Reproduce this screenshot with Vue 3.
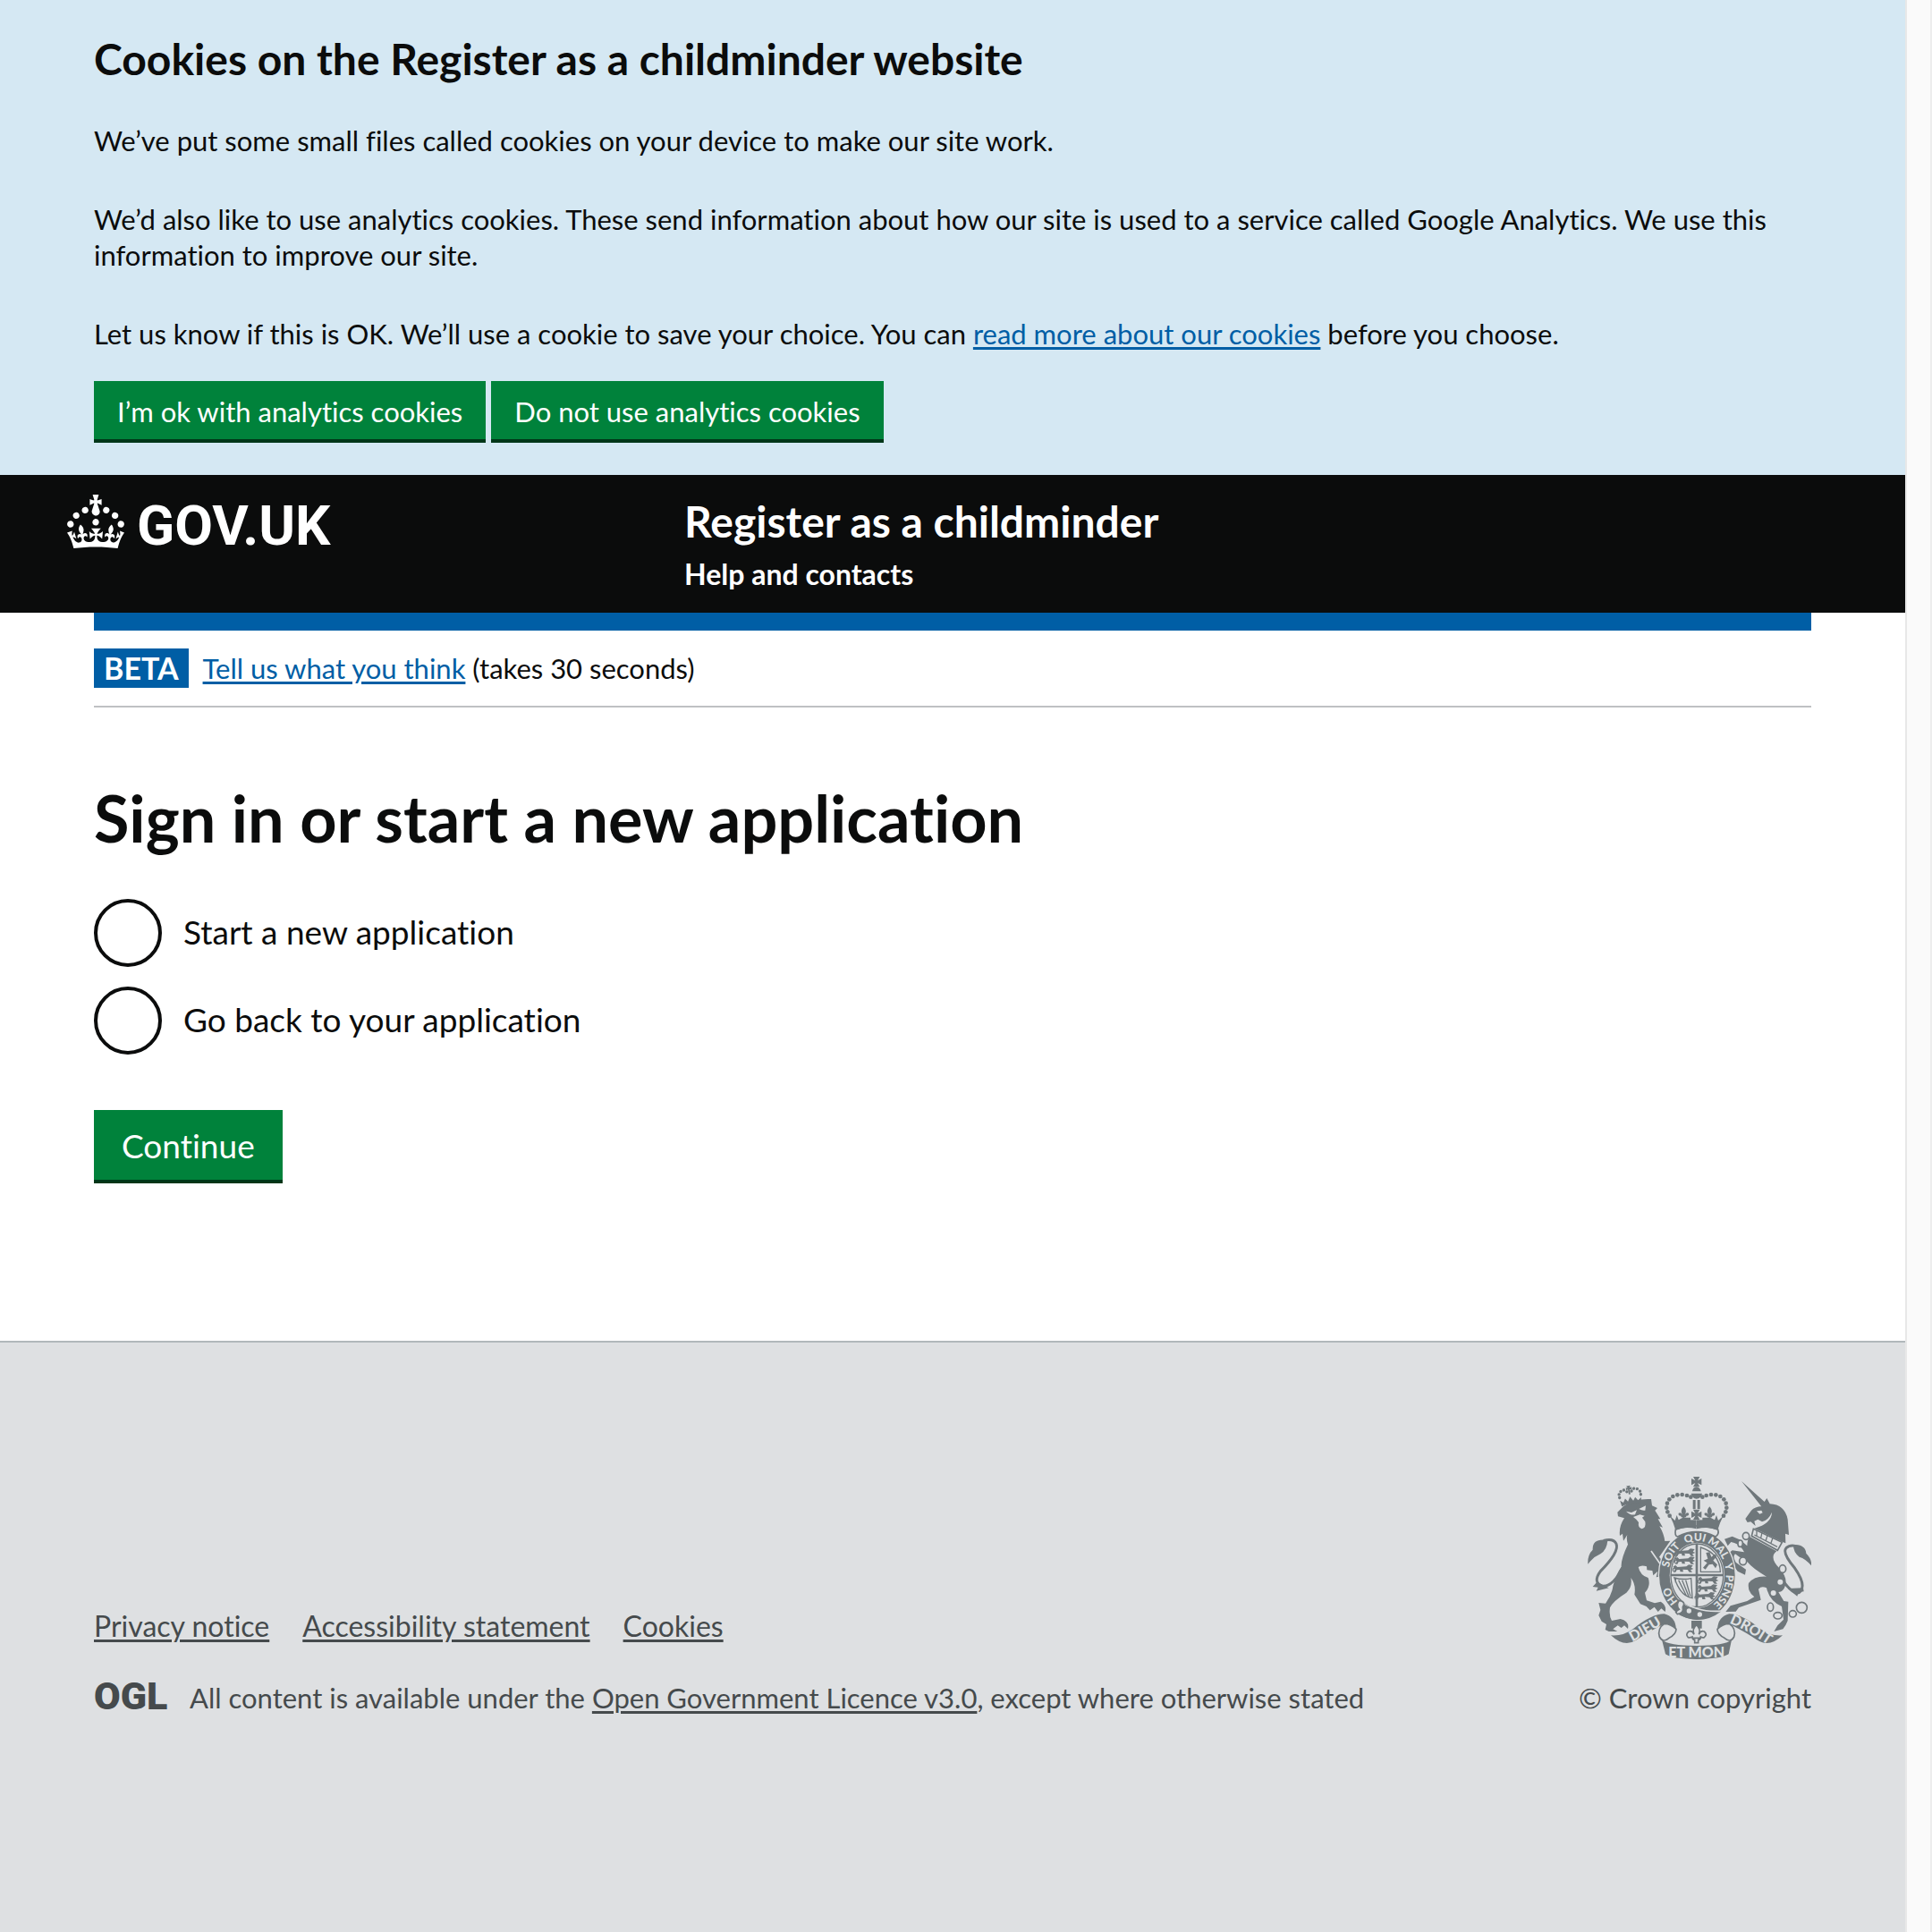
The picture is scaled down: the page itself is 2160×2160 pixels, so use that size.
<script setup>
import { ref } from 'vue'

const choice = ref('')
const options = [
  { id: 'start', label: 'Start a new application' },
  { id: 'return', label: 'Go back to your application' },
]
const footerLinks = ['Privacy notice', 'Accessibility statement', 'Cookies']

// Pearls on the left arch of the central crown, mirrored for the right one
const pearls = [
  [451, 161], [438, 156], [422, 153], [406, 154], [391, 159],
  [379, 169], [372, 182], [370, 197], [373, 211], [380, 224],
]
// Centres of the heraldic lions in the first and fourth quarters
const lions = [
  [434, 348], [434, 375], [428, 402],
  [512, 441], [510, 468], [502, 494],
]
</script>

<template>
  <div class="window">
    <div class="page">
      <section class="cookies" aria-label="Cookie banner">
        <h2>Cookies on the Register as a childminder website</h2>
        <div class="cookies-copy">
          <p>We’ve put some small files called cookies on your device to make our site work.</p>
          <p>We’d also like to use analytics cookies. These send information about how our site is used to a service called Google Analytics. We use this information to improve our site.</p>
          <p>Let us know if this is OK. We’ll use a cookie to save your choice. You can <a href="#">read more about our cookies</a> before you choose.</p>
        </div>
        <div class="cookies-actions">
          <button type="button">I’m ok with analytics cookies</button>
          <button type="button">Do not use analytics cookies</button>
        </div>
      </section>

      <header class="header">
        <a class="logo" href="#" aria-label="GOV.UK">
          <svg class="logo-mark" viewBox="0 0 150 30" aria-hidden="true">
            <path fill="#fff" d="M22.6 10.4c-1 .4-2-.1-2.4-1-.4-.9.1-2 1-2.4.9-.4 2 .1 2.4 1s-.1 2-1 2.4m-5.9 6.7c-.9.4-2-.1-2.4-1-.4-.9.1-2 1-2.4.9-.4 2 .1 2.4 1s-.1 2-1 2.4m10.8-3.7c-1 .4-2-.1-2.4-1-.4-.9.1-2 1-2.4.9-.4 2 .1 2.4 1s0 2-1 2.4m3.3 4.8c-1 .4-2-.1-2.4-1-.4-.9.1-2 1-2.4.9-.4 2 .1 2.4 1s-.1 2-1 2.4M17 4.7l2.3 1.2V2.5l-2.3.7-.2-.2.9-3h-3.4l.9 3-.2.2c-.1.1-2.3-.7-2.3-.7v3.4L15 4.7c.1.1.1.2.2.2l-1.3 4c-.1.2-.1.4-.1.6 0 1.1.8 2 1.9 2.2h.7c1-.2 1.9-1.1 1.9-2.1 0-.2 0-.4-.1-.6l-1.3-4c-.1-.2 0-.2.1-.3m-7.6 5.7c.9.4 2-.1 2.4-1 .4-.9-.1-2-1-2.4-.9-.4-2 .1-2.4 1s0 2 1 2.4m-5 3c.9.4 2-.1 2.4-1 .4-.9-.1-2-1-2.4-.9-.4-2 .1-2.4 1s.1 2 1 2.4m-3.2 4.8c.9.4 2-.1 2.4-1 .4-.9-.1-2-1-2.4-.9-.4-2 .1-2.4 1s0 2 1 2.4m14.8 11c4.4 0 8.6.3 12.3.8 1.1-4.5 2.4-7 3.7-8.8l-2.5-.9c.2 1.3.3 1.9 0 2.7-.4-.4-.8-1.1-1.1-2.3l-1.2 4c.7-.5 1.3-.8 2-.9-1.1 2.5-2.6 3.1-3.5 3-1.1-.2-1.7-1.2-1.5-2.1.3-1.2 1.5-1.5 2.1-.1 1.1-2.3-.8-3-2-2.3 1.9-1.9 2.1-3.5.6-5.6-2.1 1.6-2.1 3.2-1.2 5.5-1.2-1.4-3.2-.6-2.5 1.6.9-1.4 2.1-.5 1.9.8-.2 1.1-1.7 2.1-3.5 1.9-2.7-.2-2.9-2.1-2.9-3.6.7-.1 1.9.5 2.9 1.9l.4-4.3c-1.1 1.1-2.1 1.4-3.2 1.4.4-1.2 2.1-3 2.1-3h-5.4s1.7 1.9 2.1 3c-1.1 0-2.1-.2-3.2-1.4l.4 4.3c1-1.4 2.2-2 2.9-1.9-.1 1.5-.2 3.4-2.9 3.6-1.9.2-3.4-.8-3.5-1.9-.2-1.3 1-2.2 1.9-.8.7-2.3-1.2-3-2.5-1.6.9-2.2.9-3.9-1.2-5.5-1.5 2-1.3 3.7.6 5.6-1.2-.7-3.1 0-2 2.3.6-1.4 1.8-1.1 2.1.1.2.9-.3 1.9-1.5 2.1-.9.2-2.4-.5-3.5-3 .6 0 1.2.3 2 .9l-1.2-4c-.3 1.1-.7 1.9-1.1 2.3-.3-.8-.2-1.4 0-2.7l-2.9.9C1.3 23 2.6 25.5 3.7 30c3.7-.5 7.9-.8 12.3-.8" />
            <text class="logo-text" x="39" y="28">GOV.UK</text>
          </svg>
        </a>
        <div class="header-content">
          <a class="service" href="#">Register as a childminder</a>
          <a class="help" href="#">Help and contacts</a>
        </div>
      </header>

      <main class="main">
        <div class="phase">
          <strong class="tag">BETA</strong>
          <span><a href="#">Tell us what you think</a> (takes 30 seconds)</span>
        </div>
        <h1 id="question">Sign in or start a new application</h1>
        <form @submit.prevent>
          <div class="radios" role="radiogroup" aria-labelledby="question">
            <div v-for="o in options" :key="o.id" class="radio">
              <input :id="o.id" v-model="choice" type="radio" name="application" :value="o.id" />
              <label :for="o.id">{{ o.label }}</label>
            </div>
          </div>
          <button class="continue" type="submit">Continue</button>
        </form>
      </main>

      <footer class="footer">
        <div class="footer-meta">
          <nav class="footer-links">
            <a v-for="l in footerLinks" :key="l" href="#">{{ l }}</a>
          </nav>
          <div class="licence">
            <svg class="ogl" viewBox="0 0 86 40" role="img" aria-label="Open Government Licence">
              <text class="ogl-text" x="0" y="33">OGL</text>
            </svg>
            <span>All content is available under the <a href="#">Open Government Licence v3.0</a>, except where otherwise stated</span>
          </div>
        </div>
        <a class="copyright" href="#">
          <svg class="arms" viewBox="105 93 750 612" aria-hidden="true">
            <defs>
              <path id="garter-line" d="M472 540A97 116 0 0 1 472 308A97 116 0 0 1 472 540" />
              <path id="scroll-left" d="M243 652Q285 632 366 582" />
              <path id="scroll-right" d="M574 582Q630 602 716 660" />
              <g id="pattee">
                <path d="M-11-17H11L4-4L17-11V11L4 4L11 17H-11L-4 4L-17 11V-11L-4-4Z" />
              </g>
              <g id="fleur">
                <path d="M0-20Q13-5 4 8Q8-3 17 2Q19 12 9 11Q10 17 3 16V22H-3V16Q-10 17-9 11Q-19 12-17 2Q-8-3-4 8Q-13-5 0-20Z" />
              </g>
              <g id="half-crown">
                <circle v-for="p in pearls" :key="p[0]" :cx="p[0]" :cy="p[1]" r="7" />
                <path d="M381 224L398 240L404 222L410 238L424 230H470V268Q430 258 400 272L392 248Z" />
                <use href="#fleur" x="427" y="213" />
              </g>
              <g id="lion-passant">
                <path d="M-36-8L-28-12L-22-6L8-8L16-14L30-12L24-4L32 0L22 4L28 11H18L12 3L-4 2L-2 10H-12L-14 3L-24 4L-28 11H-36L-30 2Z" />
                <path class="line" d="M-26-4Q-40-4-36 8" />
              </g>
            </defs>

            <!-- lion -->
            <path d="M205 212L225 192Q265 165 318 168L321 190L339 198L331 206L349 235H341L357 263L346 259Q361 285 364 309L382 308L345 362L376 400L382 432L371 450L362 436L354 446L345 428L335 430L340 410L325 424L322 408L304 406L303 394Q285 388 275 396Q282 425 308 432Q318 460 297 482L303 508L330 517L350 512Q371 525 365 546L352 535L341 546L329 530L314 541L302 528L282 520L262 488Q268 455 250 432Q256 462 235 482Q190 510 180 532Q176 560 186 576L215 570Q246 578 240 603L228 592L218 600L206 592L190 604L205 612H176L164 606L168 588L152 578L142 558L148 540L142 516L165 518Q186 490 190 460Q200 420 218 395Q216 370 240 320Q234 300 238 288L225 308L222 284L213 291Q209 260 228 232L207 226Z" />
            <path class="paper" d="M234 209L252 213L270 205L264 220Q250 224 234 209ZM277 201L300 190L298 206Q288 208 277 201ZM258 228L280 220L296 224L288 230L298 244Q302 264 287 268Q273 264 276 246L268 236Z" />
            <path class="paper-line" d="M318 342L378 428" />
            <path class="line thick" d="M222 398Q190 462 156 460Q120 448 148 410Q212 345 201 318Q192 298 158 307" />
            <path d="M172 306Q120 298 122 338Q104 356 106 386Q124 362 148 352Q170 338 172 306ZM136 446L122 462L140 464L134 476L176 466Z" />
            <g transform="rotate(-9 247 160)">
              <path d="M215 188L212 168L222 176L230 164L238 175L247 160L256 175L264 164L272 176L284 168L280 188Q247 178 215 188Z" />
              <circle v-for="c in [[212,158],[212,147],[219,138],[230,135],[239,142],[255,142],[264,135],[275,138],[283,147],[284,158]]" :key="c[0] + '-' + c[1]" :cx="c[0]" :cy="c[1]" r="5" />
              <path d="M240 123H254L250 130L257 128V137L250 135V152H244V135L238 137V128L244 130Z" />
            </g>

            <!-- unicorn -->
            <path d="M621 108L704 182L689 194ZM688 192L706 165L716 184Q766 186 776 236L780 288L768 284L769 316L752 309L664 266Q722 250 723 212Q712 238 690 244L676 236L664 242L668 258L652 244L641 246L634 234L654 206Q666 194 688 192Z" />
            <path class="paper" d="M672 208L688 206L692 214L682 218Z" />
            <path d="M648 294L739 343Q712 362 748 400Q780 435 765 466Q758 480 745 480L763 510L778 512L776 576Q770 592 760 604L730 612L742 592L762 572L756 528Q715 510 705 466Q688 458 678 470L686 506L612 532L602 545L568 546L584 526L640 510L664 496Q640 478 645 450Q665 425 705 428Q660 402 640 378Q615 365 600 352Q590 360 602 380L636 404L633 422L608 410L585 378Q568 354 590 340L630 346Q618 322 597 315L586 312L575 325L564 302L590 293L618 305L640 325Q640 305 648 294Z" />
            <path class="band" d="M661 268L757 313L742 340L655 292Z" />
            <path class="line" d="M664 288L741 328M672 274V292M690 280L686 298M708 290L703 306M726 298L720 315" />
            <path class="line thick" d="M750 428Q792 490 814 482Q842 460 800 400Q756 348 771 332Q786 318 812 328" />
            <path d="M795 321Q836 320 838 350Q858 370 855 391Q836 368 815 362Q794 346 795 321ZM776 468L828 466L830 478L812 480L808 494Z" />
            <g class="chain">
              <ellipse cx="636" cy="292" rx="11" ry="12" />
              <ellipse cx="617" cy="317" rx="8" ry="11" />
              <ellipse cx="626" cy="376" rx="12" ry="13" />
              <ellipse cx="759" cy="402" rx="11" ry="13" />
              <ellipse cx="718" cy="530" rx="10" ry="14" />
              <ellipse cx="743" cy="559" rx="14" ry="11" />
              <ellipse cx="793" cy="553" rx="12" ry="11" />
              <circle cx="823" cy="532" r="18" />
            </g>
            <circle class="paper" cx="751" cy="446" r="9" />
            <circle class="paper" cx="728" cy="483" r="9" />

            <!-- garter -->
            <ellipse cx="472" cy="424" rx="131" ry="151" class="paper" />
            <ellipse cx="472" cy="424" rx="127" ry="148" />
            <ellipse cx="472" cy="424" rx="92" ry="110" class="paper" />
            <ellipse cx="472" cy="424" rx="88" ry="106" class="line" />
            <g class="motto">
              <text><textPath href="#garter-line" startOffset="15%">HO</textPath></text>
              <text><textPath href="#garter-line" startOffset="35%">SOIT</textPath></text>
              <text><textPath href="#garter-line" startOffset="49%">QUI</textPath></text>
              <text><textPath href="#garter-line" startOffset="61%">MAL</textPath></text>
              <text><textPath href="#garter-line" startOffset="71%">Y</textPath></text>
              <text><textPath href="#garter-line" startOffset="83%">PENSE</textPath></text>
            </g>
            <path d="M405 514Q470 560 552 545Q515 574 470 573Q430 568 398 548Z" />
            <path class="paper-line" d="M420 508Q470 548 550 544" />
            <path class="band" d="M412 508Q436 512 424 530Q428 552 406 554Q396 546 412 538Q400 522 412 508Z" />
            <circle class="paper" cx="445" cy="543" r="8" />
            <circle class="paper" cx="481" cy="555" r="8" />
            <path d="M467 318H475V528H467ZM384 419H560V427H384Z" />

            <!-- quarters -->
            <use v-for="l in lions" :key="l[0] + '-' + l[1]" href="#lion-passant" :x="l[0]" :y="l[1]" />
            <path class="line" d="M484 330V412H550Q548 350 484 330Z" />
            <path d="M502 348L514 346L520 362L532 352L538 360L526 374L540 388L534 400L524 386L512 388L500 404L492 398L506 382L494 374L508 368Z" />
            <path class="line" d="M396 432Q424 440 452 434L456 500Q416 494 396 432ZM410 440L436 492M422 440L444 494M434 440L450 494M400 434V448" />

            <!-- crown -->
            <path class="band" d="M400 270Q396 292 407 294Q470 262 534 294Q547 286 542 270Q470 246 400 270Z" />
            <use href="#half-crown" />
            <use href="#half-crown" transform="translate(941 0) scale(-1 1)" />
            <use href="#pattee" x="470" y="110" />
            <path d="M456 142Q458 128 470 127Q482 128 485 142ZM452 149H489Q486 166 470 167Q456 166 452 149ZM458 171H467V202H458ZM473 171H482V202H473Z" />
            <path class="paper" d="M450 202H490V238H450Z" />
            <use href="#pattee" x="470" y="220" />

            <!-- scroll -->
            <g id="scroll-half">
              <path d="M183 625Q225 628 258 603Q320 553 362 553Q400 562 402 606Q372 590 355 590Q300 618 270 640Q228 668 183 625Z" />
              <path class="band" d="M362 586Q338 602 346 630Q358 652 378 634Q402 622 402 604Q384 586 362 586Z" />
              <path class="paper" d="M366 596Q384 596 390 606Q384 622 366 630Q356 612 366 596Z" />
            </g>
            <use href="#scroll-half" transform="translate(942 0) scale(-1 1)" />
            <path d="M354 640Q376 660 470 660Q566 660 588 640L578 688Q550 705 470 705Q390 705 366 688Z" />
            <g class="scroll-text">
              <text><textPath href="#scroll-left" startOffset="50%">DIEU</textPath></text>
              <text><textPath href="#scroll-right" startOffset="50%">DROIT</textPath></text>
              <text x="470" y="699">ET MON</text>
            </g>
            <path d="M453 576H488V602H453Z" />
            <path class="band" d="M470 590Q486 604 478 622Q484 608 496 612Q508 622 496 632Q490 634 484 630Q484 640 476 640V650H464V640Q456 640 456 630Q448 634 442 632Q432 622 444 612Q456 608 462 622Q454 604 470 590ZM454 634H486" />
          </svg>
          <span>© Crown copyright</span>
        </a>
      </footer>
    </div>
    <div class="scroll-track" aria-hidden="true"></div>
  </div>
</template>

<style>
body {
  margin: 0;
}
</style>

<style scoped>
.window {
  display: flex;
  min-height: 100vh;
  background: #fff;
  color: #0b0c0c;
  font-family: Lato, 'Liberation Sans', sans-serif;
  font-size: 31px;
  font-variant-ligatures: none;
  line-height: 40px;
}
.page {
  flex: 1;
  min-width: 0;
  display: flex;
  flex-direction: column;
}
.scroll-track {
  flex: 0 0 26px;
  background: #fafafa;
  border-left: 2px solid #e8e8e8;
  border-right: 2px solid #ededed;
}
h1,
h2,
p {
  margin: 0;
}
a {
  color: #005ea5;
  text-decoration-thickness: 3px;
  text-underline-offset: 3px;
}
button {
  border: 0;
  border-radius: 0;
  background: #00823b;
  box-shadow: 0 4px 0 #003618;
  color: #fff;
  font: inherit;
  font-variant-ligatures: none;
  cursor: pointer;
}

.cookies {
  padding: 41px 105px 40px;
  background: #d5e8f3;
}
.cookies h2 {
  font-size: 48px;
  line-height: 50px;
}
.cookies-copy {
  display: flex;
  flex-direction: column;
  gap: 48px;
  padding: 46px 0 33px;
}
.cookies-actions {
  display: flex;
  gap: 6px;
}
.cookies-actions button {
  padding: 14px 26px 11px;
}

.header {
  display: flex;
  padding: 0 75px;
  background: #0b0c0c;
}
.header a {
  color: #fff;
  text-decoration: none;
}
.logo {
  flex: 0 0 calc(100% / 3);
  padding-top: 22px;
}
.logo-mark {
  display: block;
  width: 300px;
  height: 60px;
}
.logo-text {
  fill: #fff;
  font-family: Roboto, 'Liberation Sans', sans-serif;
  font-size: 31px;
  font-weight: 700;
}
.header-content {
  display: flex;
  flex-direction: column;
  align-items: flex-start;
  gap: 14px;
  padding: 27px 0 23px 30px;
  font-weight: 700;
}
.service {
  font-size: 48px;
  line-height: 50px;
}
.help {
  font-size: 32px;
}

.main {
  margin: 0 105px;
  border-top: 20px solid #005ea5;
  padding-bottom: 180px;
}
.phase {
  display: flex;
  align-items: center;
  gap: 16px;
  padding: 20px 0;
  border-bottom: 2px solid #bfc1c3;
}
.tag {
  padding: 0 11px;
  background: #005ea5;
  color: #fff;
  font-size: 34px;
  line-height: 44px;
}
h1 {
  padding-top: 85px;
  font-size: 72px;
  line-height: 76px;
}
.radios {
  display: flex;
  flex-direction: column;
  gap: 22px;
  padding: 53px 0 62px;
}
.radio {
  display: flex;
  align-items: center;
  gap: 24px;
}
.radio input {
  appearance: none;
  box-sizing: border-box;
  width: 76px;
  height: 76px;
  margin: 0;
  border: 4px solid #0b0c0c;
  border-radius: 50%;
  background: #fff;
}
.radio input:checked {
  background: radial-gradient(circle, #0b0c0c 18px, #fff 20px);
}
.radio label {
  padding-bottom: 2px;
  font-size: 37px;
  line-height: 50px;
}
.continue {
  padding: 15px 31px 13px;
  font-size: 37px;
  line-height: 50px;
}

.footer {
  flex: 1;
  display: flex;
  justify-content: space-between;
  align-items: flex-start;
  padding: 150px 105px 0;
  border-top: 2px solid #b1b8bb;
  background: #dee0e2;
  color: #454a4c;
}
.footer a {
  color: inherit;
}
.footer-meta {
  display: flex;
  flex-direction: column;
  gap: 40px;
  padding-top: 147px;
}
.footer-links {
  display: flex;
  gap: 37px;
  font-size: 32px;
}
.licence {
  display: flex;
  align-items: flex-start;
  gap: 21px;
}
.ogl {
  width: 86px;
  height: 40px;
}
.ogl-text {
  fill: #454a4c;
  font-family: Roboto, 'Liberation Sans', sans-serif;
  font-size: 43px;
  font-weight: 900;
}
.footer .copyright {
  display: flex;
  flex-direction: column;
  align-items: flex-end;
  gap: 23px;
  text-decoration: none;
}
.arms {
  width: 250px;
  height: 204px;
  fill: #6f777b;
}
.arms .paper {
  fill: #dee0e2;
}
.arms .paper-line {
  fill: none;
  stroke: #dee0e2;
  stroke-width: 5;
}
.arms .line {
  fill: none;
  stroke: #6f777b;
  stroke-width: 4;
}
.arms .thick {
  stroke-width: 9;
}
.arms .band {
  fill: #dee0e2;
  stroke: #6f777b;
  stroke-width: 5;
}
.chain {
  fill: #dee0e2;
  stroke: #6f777b;
  stroke-width: 5;
}
.motto,
.scroll-text {
  fill: #dee0e2;
  font-weight: 900;
  text-anchor: middle;
}
.motto {
  font-size: 36px;
}
.scroll-text {
  font-size: 48px;
}
</style>
